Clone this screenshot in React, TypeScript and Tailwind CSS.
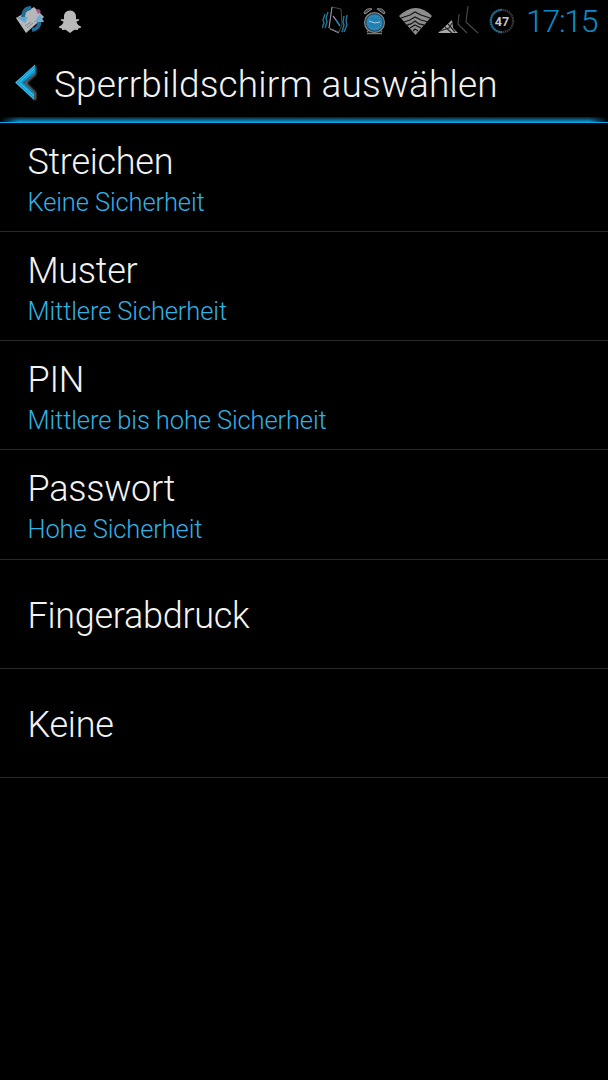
import React from 'react';

const options = [
  { title: 'Streichen', summary: 'Keine Sicherheit' },
  { title: 'Muster', summary: 'Mittlere Sicherheit' },
  { title: 'PIN', summary: 'Mittlere bis hohe Sicherheit' },
  { title: 'Passwort', summary: 'Hohe Sicherheit' },
  { title: 'Fingerabdruck' },
  { title: 'Keine' },
];

const MailIcon = () => (
  <svg width="30" height="30" viewBox="0 0 30 30" fill="none">
    <path d="M1 13 19 2 29 12 11 28Z" fill="#b4b8bb" />
    <path d="M10 21l6-4M12 23l6-5" stroke="#747c81" strokeWidth=".8" />
    <path d="M21 5l3-1 2 3-3 2Z" fill="#b0508c" />
    <path d="M16 3C9 3 8 8 8 14" stroke="#206d98" strokeWidth="4" />
    <path d="M1 12h12l-3 6Z" fill="#62a9d2" />
    <path d="M17 25c6-1 8-5 7-10" stroke="#206d98" strokeWidth="4" />
    <path d="M19 17 25 9l4 8Z" fill="#72add1" />
  </svg>
);

const GhostIcon = () => (
  <svg width="24" height="24" viewBox="0 0 24 24" fill="#b9b9b9">
    <path d="M12 .5c-4 0-6.200 3-6 6.600v2.200L3.200 9l-.5 1.300 2.900 1.500c-.6 2.200-2.300 4-4.900 4.900.3 1.200 1.600 1.300 2.900 1.600l.6 1.600 3.400-.2L12 23l4.400-3.300 3.400.2.6-1.600c1.300-.3 2.600-.4 2.900-1.600-2.600-.9-4.300-2.700-4.900-4.900l2.900-1.500L20.800 9l-2.800.3V7.100C18.200 3.500 16 .5 12 .5Z" />
  </svg>
);

const VibrateIcon = () => (
  <svg width="26" height="30" viewBox="0 0 26 30" fill="none">
    <path d="M10 2 19 4 20 20 17 27 7 23Z" stroke="#454a4e" strokeWidth="1" />
    <path d="M10 2 7 23M8 24l9 4" stroke="#91999e" strokeWidth="1" />
    <path d="M14 15 18 21" stroke="#248bb8" strokeWidth="1.500" />
    <path d="M11 11 14 15" stroke="#a878b4" strokeWidth="1.300" />
    <path d="M3 9 1 15l1 3-2 5M6 7 4 13l1 4-2 6M22 11l-1 6 1 3-2 7M25 10l-1 6 1 4-3 7" stroke="#24779b" strokeWidth="1.400" />
  </svg>
);

const AlarmIcon = () => (
  <svg width="25" height="28" viewBox="0 0 25 28" fill="none">
    <path d="M2 6c1-4 5-5 8-4L3 7ZM15 2c3-1 7 0 8 4l-1 1Z" fill="#444" stroke="#999" strokeWidth=".9" />
    <path d="m5 25 3-3M20 25l-3-3M5 26.500h15" stroke="#777" strokeWidth="1.300" />
    <circle cx="12.500" cy="15.500" r="9.800" fill="#2180b0" stroke="#858585" strokeWidth="1.500" />
    <circle cx="12.500" cy="15.500" r="8.800" stroke="#222b30" strokeWidth=".8" />
    <circle cx="12.500" cy="15.500" r="6.500" stroke="#57a2c7" strokeWidth=".9" strokeDasharray="1 1.500" />
    <path d="m7 14 6 2 5-1" stroke="#b4d9e9" strokeWidth=".9" />
  </svg>
);

const WifiIcon = () => (
  <svg width="34" height="28" viewBox="0 0 34 28" fill="none">
    <path d="M0 9Q17-7 33 9L16.500 28Z" fill="#8d8d8d" />
    <path d="M2 11 11 8l5-3 6 3 9 3M5 15l6-2 5-3 6 3 7 2M8 18l4-1 4-3 4 3 5 1M11 21l5-3 6 3M14 24l2-2 3 2" stroke="#161616" strokeWidth="1.300" />
  </svg>
);

const SignalIcon = () => (
  <svg width="41" height="28" viewBox="0 0 41 28" fill="none">
    <path d="M0 27 14 14l1 8 5 5Z" fill="#aaa" />
    <path d="m7 21 7 6M10 18l7 8M2 25l9-3 3-5" stroke="#222" strokeWidth="1.200" />
    <path d="m21 8-1 10 9 9M30 0l-2 16 12 11" stroke="#4b4b4b" strokeWidth="1.100" />
  </svg>
);

const BatteryIcon = () => (
  <svg width="26" height="26" viewBox="0 0 26 26" fill="none">
    <circle cx="13" cy="13" r="11.200" stroke="#35373a" strokeWidth="2.200" strokeDasharray="1.700 .5" />
    <path d="M13 24.200A11.200 11.200 0 0 1 13 1.800" stroke="#1c719d" strokeWidth="2.200" strokeDasharray="1.700 .5" />
    <text x="13" y="17.500" textAnchor="middle" fill="#c7c7c7" fontSize="12.500" fontWeight="700" fontFamily="Roboto, sans-serif">47</text>
  </svg>
);

const BackIcon = () => (
  <svg width="24" height="38" viewBox="0 0 24 38" fill="none">
    <path d="M20 2v8L10 19l10 10v7" stroke="#8c8884" strokeWidth="2" className="blur-[1px]" />
    <path d="M20 1v8L8 18.500 19 29v7L0 18.500Z" fill="#159bd0" />
    <path d="M20 1 1 18.500 19 35M19 5 4 18.500 19 32" stroke="#43c5ef" strokeWidth="1" />
    <path d="M20 9 8 18.500 19 29" stroke="#087aaa" strokeWidth="1.200" />
  </svg>
);

const App: React.FC = () => (
  <div className="min-h-screen bg-black font-['Roboto',sans-serif] font-light text-[#f3f3f3]">
    {/* Status bar */}
    <header className="flex h-[46px] items-start">
      <div className="ml-[15px] mt-[5px]"><MailIcon /></div>
      <div className="ml-[13px] mt-[10px]"><GhostIcon /></div>
      <div className="ml-auto mt-[5px]"><VibrateIcon /></div>
      <div className="ml-[14px] mt-[7px]"><AlarmIcon /></div>
      <div className="ml-[12px] mt-[7px]"><WifiIcon /></div>
      <div className="ml-[5px] mt-[6px]"><SignalIcon /></div>
      <div className="ml-[10px] mt-[8px]"><BatteryIcon /></div>
      <span className="ml-[11px] mr-[10px] mt-px w-[72px] whitespace-nowrap text-[32px] leading-[40px] tracking-[-1.300px] text-[#078dca]">17:15</span>
    </header>

    {/* Action bar */}
    <div className="flex h-[71px] items-start">
      <div className="ml-[15px] mt-[18px]"><BackIcon /></div>
      <h1 className="ml-[15px] mt-[15px] whitespace-nowrap text-[37px] leading-[48px] tracking-[0.160px]">Sperrbildschirm auswählen</h1>
    </div>
    <div className="h-[5px] bg-linear-to-b from-[#06202e] to-[#0a96d2] mask-x-from-97%" />
    <div className="h-px bg-[#08a9ed]" />

    {/* Lock methods */}
    <ul>
      {options.map((option) => (
        <li key={option.title} className="flex h-[109.150px] flex-col justify-center border-b border-[#292929] pl-[27.500px] pt-[5px]">
          <span className="text-[36px] leading-[44px] tracking-[-0.280px]">{option.title}</span>
          {option.summary && <span className="-mb-px text-[25.500px] leading-[37px] tracking-[-0.120px] text-[#30b2e5]">{option.summary}</span>}
        </li>
      ))}
    </ul>
  </div>
);

export default App;
